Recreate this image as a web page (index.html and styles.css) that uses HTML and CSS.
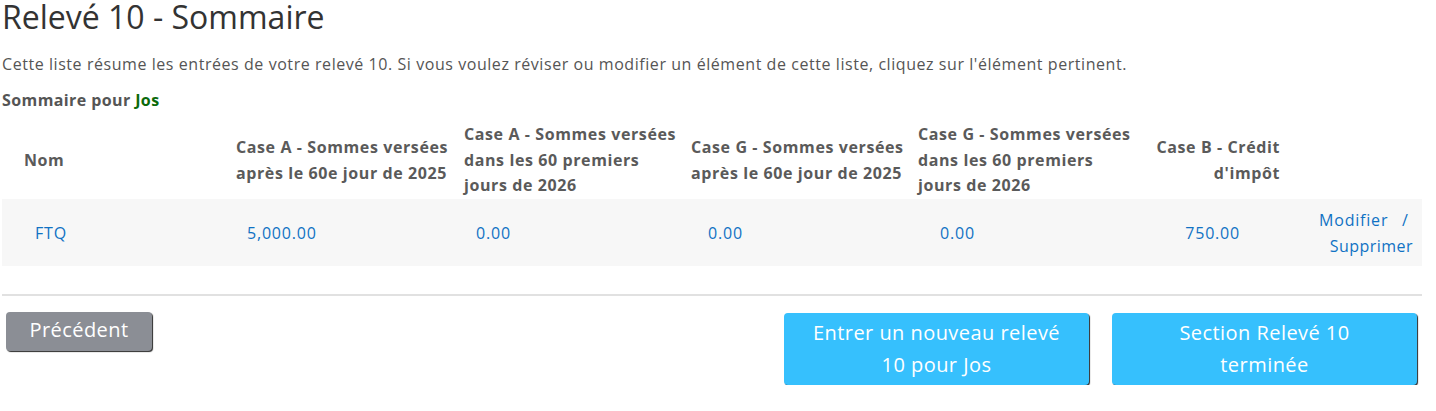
FILE: index.html
```html
<!DOCTYPE html>
<html lang="fr">
<head>
<meta charset="utf-8">
<title>Relevé 10 - Sommaire</title>
<link rel="stylesheet" href="styles.css">
</head>
<body>
<main class="page">
  <h1 class="title">Relevé 10 - Sommaire</h1>
  <p class="intro">Cette liste résume les entrées de votre relevé 10. Si vous voulez réviser ou modifier un élément de cette liste, cliquez sur l'élément pertinent.</p>
  <p class="owner">Sommaire pour <span class="owner-name">Jos</span></p>
  <table class="summary">
    <colgroup>
      <col class="c1"><col class="c2"><col class="c3"><col class="c4"><col class="c5"><col class="c6"><col class="c7">
    </colgroup>
    <thead>
      <tr>
        <th class="h-name">Nom</th>
        <th>Case A - Sommes versées après le 60e jour de 2025</th>
        <th>Case A - Sommes versées dans les 60 premiers jours de 2026</th>
        <th>Case G - Sommes versées après le 60e jour de 2025</th>
        <th>Case G - Sommes versées dans les 60 premiers jours de 2026</th>
        <th class="h-right">Case B - Crédit d'impôt</th>
        <th></th>
      </tr>
    </thead>
    <tbody>
      <tr>
        <td class="d1"><a href="#">FTQ</a></td>
        <td class="d2"><a href="#">5,000.00</a></td>
        <td class="d3"><a href="#">0.00</a></td>
        <td class="d4"><a href="#">0.00</a></td>
        <td class="d5"><a href="#">0.00</a></td>
        <td class="d6"><a href="#">750.00</a></td>
        <td class="d7"><a href="#" class="edit">Modifier</a>&nbsp;&nbsp; /&nbsp; <a href="#">Supprimer</a></td>
      </tr>
    </tbody>
  </table>
  <hr class="sep">
  <div class="actions">
    <button class="btn btn-gray">Précédent</button>
    <div class="actions-right">
      <button class="btn btn-blue">Entrer un nouveau relevé 10 pour Jos</button>
      <button class="btn btn-blue">Section Relevé 10 terminée</button>
    </div>
  </div>
</main>
</body>
</html>
```
FILE: styles.css
```css
html, body {
  margin: 0;
  padding: 0;
  background: #fff;
}
body {
  font-family: "Open Sans", Lato, "Liberation Sans", sans-serif;
  color: #555;
}
.page {
  width: 1420px;
  padding: 0 2px;
}
.title {
  margin: 0;
  font-size: 32px;
  font-weight: 400;
  line-height: 34px;
  color: #333;
}
.intro {
  margin: 19px 0 0;
  font-size: 16px;
  letter-spacing: 0.56px;
  line-height: 22px;
  color: #555;
}
.owner {
  margin: 14px 0 0;
  font-size: 16px;
  letter-spacing: 0.4px;
  font-weight: 700;
  line-height: 22px;
  color: #555;
}
.owner-name {
  color: #0b6a0b;
}
.summary {
  margin-top: 11px;
  width: 1420px;
  border-collapse: collapse;
  table-layout: fixed;
}
.c1 { width: 224px; }
.c2 { width: 228px; }
.c3 { width: 227px; }
.c4 { width: 227px; }
.c5 { width: 228px; }
.c6 { width: 154px; }
.c7 { width: 132px; }
.summary th {
  text-align: left;
  vertical-align: middle;
  font-size: 16px;
  letter-spacing: 0.6px;
  font-weight: 700;
  line-height: 25.5px;
  color: #5a5a5a;
  padding: 0 4px 0 10px;
  height: 77px;
}
.summary th.h-name { padding-left: 22px; }
.summary th.h-right { text-align: right; padding-right: 10px; }
.summary tbody tr {
  background: #f7f7f7;
}
.summary td {
  height: 67px;
  padding: 0;
  font-size: 16px;
  letter-spacing: 0.8px;
  line-height: 26px;
  vertical-align: middle;
}
.summary a {
  color: #1072c4;
  text-decoration: none;
}
.d1 { padding-left: 33px !important; }
.d2 { padding-left: 21px !important; }
.d3 { padding-left: 22px !important; }
.d4 { padding-left: 27px !important; }
.d5 { padding-left: 32px !important; }
.d6 { text-align: right; padding-right: 50px !important; }
.d7 {
  text-align: right;
  padding-right: 9px !important;
  padding-left: 10px !important;
  letter-spacing: 0.45px !important;
  color: #1072c4;
}
.d7 .edit {
  letter-spacing: 0.8px;
}
.sep {
  margin: 28px 0 0;
  border: 0;
  border-top: 2px solid #e1e1e1;
  height: 0;
}
.actions {
  display: flex;
  justify-content: space-between;
  align-items: flex-start;
  margin-top: 16px;
}
.actions-right {
  display: flex;
  gap: 23px;
  margin-top: 1px;
  padding-right: 5px;
}
.btn {
  font-family: "Open Sans", Lato, "Liberation Sans", sans-serif;
  border: 0;
  border-radius: 4px;
  color: #fff;
  font-size: 20px;
  letter-spacing: 0.45px;
  line-height: 32px;
  cursor: pointer;
  box-shadow: 1px 1px 1px #2b2b2b;
}
.btn-gray {
  margin-left: 4px;
  width: 146px;
  height: 39px;
  padding: 0 0 3px;
  background: #8b8e95;
}
.btn-blue {
  width: 305px;
  height: 72px;
  padding: 3px 24px;
  background: #36c0fd;
}
```
